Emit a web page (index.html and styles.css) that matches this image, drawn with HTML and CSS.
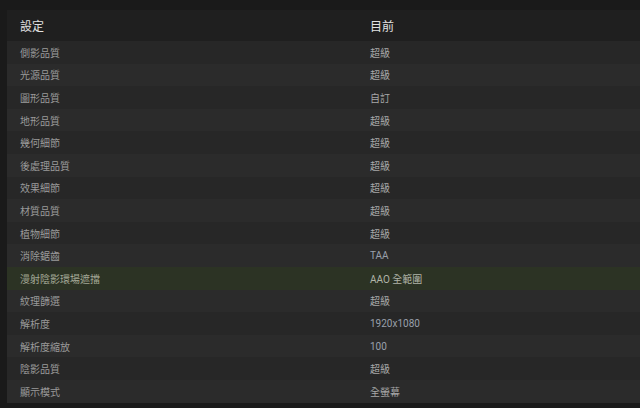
FILE: index.html
```html
<!DOCTYPE html>
<html lang="zh-Hant">
<head>
<meta charset="utf-8">
<link rel="stylesheet" href="styles.css">
</head>
<body>
<div class="panel">
  <div class="row head"><span class="k">設定</span><span class="v">目前</span></div>
  <div class="row"><span class="k">側影品質</span><span class="v">超級</span></div>
  <div class="row"><span class="k">光源品質</span><span class="v">超級</span></div>
  <div class="row"><span class="k">圖形品質</span><span class="v">自訂</span></div>
  <div class="row"><span class="k">地形品質</span><span class="v">超級</span></div>
  <div class="row"><span class="k">幾何細節</span><span class="v">超級</span></div>
  <div class="row"><span class="k">後處理品質</span><span class="v">超級</span></div>
  <div class="row"><span class="k">效果細節</span><span class="v">超級</span></div>
  <div class="row"><span class="k">材質品質</span><span class="v">超級</span></div>
  <div class="row"><span class="k">植物細節</span><span class="v">超級</span></div>
  <div class="row"><span class="k">消除鋸齒</span><span class="v lat">TAA</span></div>
  <div class="row hl"><span class="k">漫射陰影環場遮擋</span><span class="v">AAO 全範圍</span></div>
  <div class="row"><span class="k">紋理篩選</span><span class="v">超級</span></div>
  <div class="row"><span class="k">解析度</span><span class="v lat">1920x1080</span></div>
  <div class="row"><span class="k">解析度縮放</span><span class="v lat">100</span></div>
  <div class="row"><span class="k">陰影品質</span><span class="v">超級</span></div>
  <div class="row"><span class="k">顯示模式</span><span class="v">全螢幕</span></div>
</div>
</body>
</html>
```
FILE: styles.css
```css
html, body {
  margin: 0;
  padding: 0;
  background: #1a1a1a;
  width: 640px;
  height: 408px;
  overflow: hidden;
}
body {
  padding: 10px 0 0 7px;
  box-sizing: border-box;
  font-family: Roboto, "Noto Sans CJK TC", sans-serif;
}
.panel {
  width: 640px;
  background: #262626;
}
.row {
  display: flex;
  align-items: center;
  height: 22.6px;
  font-size: 10px;
  color: #9a9a9a;
  background: #272727;
}
.row:nth-child(odd) {
  background: #2b2b2b;
}
.row.head {
  height: 31px;
  background: #1f1f1f;
  color: #e2e2e2;
  font-size: 12px;
}
.row.hl {
  background: #2c3324;
  color: #a3a896;
}
.k {
  box-sizing: border-box;
  width: 363px;
  padding-left: 13px;
}
.v {
  color: #a8a8a8;
}
.head .v { color: #e2e2e2; }
.lat { color: #9aa0ab; }
.hl .v { color: #b0b4a8; }
```
